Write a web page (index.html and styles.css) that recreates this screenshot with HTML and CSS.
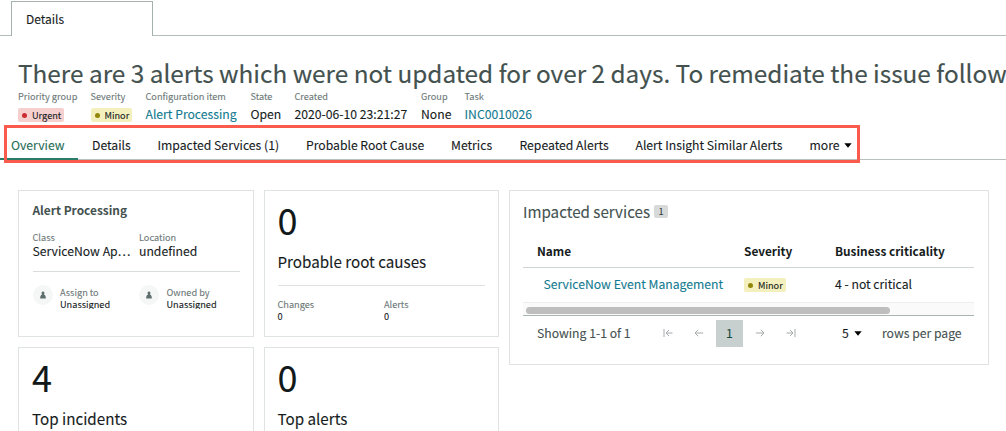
FILE: index.html
```html
<!DOCTYPE html>
<html lang="en">
<head>
<meta charset="utf-8">
<title>Alert details</title>
<link rel="stylesheet" href="styles.css">
</head>
<body>
<div class="tabbar"><div class="page-tab">Details</div></div>
<h1 class="title">There are 3 alerts which were not updated for over 2 days. To remediate the issue follow</h1>
<div class="meta">
  <div><div class="label">Priority group</div><div class="value"><span class="pill urgent"><i></i>Urgent</span></div></div>
  <div><div class="label">Severity</div><div class="value"><span class="pill minor"><i></i>Minor</span></div></div>
  <div><div class="label">Configuration item</div><div class="value link">Alert Processing</div></div>
  <div><div class="label">State</div><div class="value">Open</div></div>
  <div><div class="label">Created</div><div class="value">2020-06-10 23:21:27</div></div>
  <div><div class="label">Group</div><div class="value">None</div></div>
  <div><div class="label">Task</div><div class="value link">INC0010026</div></div>
</div>
<nav class="tabs">
  <div class="active">Overview</div>
  <div>Details</div>
  <div>Impacted Services (1)</div>
  <div>Probable Root Cause</div>
  <div>Metrics</div>
  <div>Repeated Alerts</div>
  <div>Alert Insight Similar Alerts</div>
  <div class="more">more<svg width="8" height="5" viewBox="0 0 8 5"><path d="M.3.2h7.400L4 4.800z"/></svg></div>
  <div class="highlight"></div>
</nav>
<main class="board">
  <div class="cards">
    <section class="card info">
      <h2>Alert Processing</h2>
      <div class="pair">
        <div><div class="label">Class</div><div class="big">ServiceNow Ap…</div></div>
        <div><div class="label">Location</div><div class="big">undefined</div></div>
      </div>
      <div class="people">
        <div class="person"><span class="avatar"><svg width="8" height="8" viewBox="0 0 8 8"><path d="M4 .5C2.800.500 2.500 1.300 2.600 2.200c.1.700.3 1 .4 1.300C1.800 4 1.200 4.800 1.200 7.500h5.600C6.800 4.800 6.200 4 5 3.500c.1-.3.3-.6.4-1.300C5.500 1.300 5.200.5 4 .5z"/></svg></span><div><div class="label">Assign to</div><div class="small clip">Unassigned</div></div></div>
        <div class="person"><span class="avatar"><svg width="8" height="8" viewBox="0 0 8 8"><path d="M4 .5C2.800.500 2.500 1.300 2.600 2.200c.1.700.3 1 .4 1.300C1.800 4 1.200 4.800 1.200 7.500h5.600C6.800 4.800 6.200 4 5 3.500c.1-.3.3-.6.4-1.300C5.500 1.300 5.200.5 4 .5z"/></svg></span><div><div class="label">Owned by</div><div class="small clip">Unassigned</div></div></div>
      </div>
    </section>
    <section class="card stat">
      <div class="number">0</div>
      <div class="caption">Probable root causes</div>
      <div class="counts">
        <div><div class="label">Changes</div><div class="small">0</div></div>
        <div><div class="label">Alerts</div><div class="small">0</div></div>
      </div>
    </section>
    <section class="card stat cut"><div class="number">4</div><div class="caption">Top incidents</div></section>
    <section class="card stat cut"><div class="number">0</div><div class="caption">Top alerts</div></section>
  </div>
  <section class="card services">
    <h2>Impacted services<span class="badge">1</span></h2>
    <div class="row head"><div>Name</div><div>Severity</div><div>Business criticality</div></div>
    <div class="row body"><div class="link">ServiceNow Event Management</div><div><span class="pill minor"><i></i>Minor</span></div><div>4 - not critical</div></div>
    <div class="scroll"><div class="thumb"></div></div>
    <div class="pager">
      <span class="showing">Showing 1-1 of 1</span>
      <svg width="10" height="10" viewBox="0 0 10 10"><path d="M1 1v8M9.500 5H3M6 2 3 5l3 3"/></svg>
      <svg width="10" height="10" viewBox="0 0 10 10"><path d="M9.200 5H1M4.200 1.800 1 5l3.200 3.200"/></svg>
      <span class="page">1</span>
      <svg width="10" height="10" viewBox="0 0 10 10"><path d="M.8 5H9M5.800 1.800 9 5 5.800 8.200"/></svg>
      <svg width="10" height="10" viewBox="0 0 10 10"><path d="M9 1v8M.5 5H7M4 2l3 3-3 3"/></svg>
      <span class="size">5<svg width="8" height="5" viewBox="0 0 8 5"><path d="M.3.2h7.400L4 4.800z"/></svg></span>
      <span>rows per page</span>
    </div>
  </section>
</main>
</body>
</html>
```
FILE: styles.css
```css
* { box-sizing: border-box; }
body { margin: 0; width: 1006px; height: 431px; overflow: hidden; background: #fff; color: #161b1c; font: 12.2px/16px "Noto Sans CJK SC", "Open Sans", sans-serif; white-space: nowrap; -webkit-text-stroke: .1px; }
h1, h2 { margin: 0; font-weight: 400; }
svg { display: block; flex: none; }
.tabbar { height: 36px; border-bottom: 1px solid #b3bdbb; padding: 1px 0 0 11px; }
.page-tab { width: 142px; height: 35px; border: 1px solid #a5b1af; border-bottom: 0; background: #fff; padding: 9px 0 0 14px; font-size: 12px; }
.title { margin-top: 20px; padding-left: 18px; height: 34px; font-size: 24.35px; line-height: 33px; color: #43514f; -webkit-text-stroke: .15px; }
.meta { display: grid; grid-template-columns: 72.5px 55px 105px 44px 126.5px 43.5px auto; padding-left: 18px; height: 35px; }
.label { font-size: 9.2px; line-height: 14px; color: #6c7978; }
.meta .label { line-height: 13px; }
.value { height: 20px; line-height: 20px; margin-top: 1px; }
.link { color: #127a90; }
.pill { display: flex; align-items: center; width: fit-content; height: 14px; padding: 0 3px 0 4px; border-radius: 2px; font-size: 9.2px; line-height: 13px; }
.value .pill { position: relative; top: 4px; }
.pill i { width: 5px; height: 5px; margin-right: 5px; border-radius: 50%; }
.urgent { background: #f6cfcf; }
.urgent i { background: #cb2d32; }
.minor { background: #f4f0bd; }
.minor i { background: #928709; }
.tabs { position: relative; display: grid; grid-template-columns: 81px 65.5px 148.5px 145px 68.5px 116px 174px auto; height: 35px; padding: 12px 0 0 11px; border-bottom: 1px solid #b9bfbe; }
.active { color: #1f6d56; height: 23px; margin-left: -11px; padding-left: 11px; width: 78px; border-bottom: 2px solid #2b7c68; }
.more { display: flex; gap: 4px; }
.more svg { margin-top: 6px; }
.highlight { position: absolute; left: 4px; top: 0; width: 856px; height: 38px; border: 3px solid #fb5b4d; }
.board { display: flex; gap: 10px; padding: 30px 0 0 18px; align-items: flex-start; }
.cards { display: grid; grid-template-columns: 235.5px 235.5px; grid-template-rows: 147px 84px; column-gap: 10px; row-gap: 10px; }
.card { border: 1px solid #dfe3e3; padding: 13px 13px 0; }
.cut { border-bottom: 0; }
.info { padding-left: 13.5px; }
.info h2 { font-size: 11.9px; line-height: 12px; font-weight: 700; color: #43514f; -webkit-text-stroke: 0; }
.pair { display: grid; grid-template-columns: 106.5px auto; margin: 15px 0 0; width: 207px; height: 41px; border-bottom: 1px solid #d9dcdc; }
.pair .label { line-height: 13px; }
.big { line-height: 14px; }
.people { display: grid; grid-template-columns: 106.5px auto; padding-top: 13px; }
.person { display: flex; gap: 7.5px; }
.person .label { line-height: 15px; }
.avatar { width: 20px; height: 20px; border-radius: 50%; background: #f5f7f7; display: flex; align-items: center; justify-content: center; fill: #5e6e6c; }
.small { font-size: 9.2px; line-height: 10px; }
.clip { height: 9px; line-height: 9px; overflow: hidden; }
.stat { padding-top: 9px; }
.number { font-size: 36px; line-height: 38px; color: #111819; }
.caption { font-size: 15.2px; line-height: 22px; margin-top: 12px; }
.counts { display: grid; grid-template-columns: 106.5px auto; width: 207px; margin-top: 13px; border-top: 1px solid #dfe3e3; padding-top: 11px; }
.services { width: 480px; height: 175px; padding-top: 11px; }
.services h2 { display: flex; align-items: center; gap: 4px; font-size: 15.15px; line-height: 18px; color: #43514f; }
.badge { width: 14px; height: 13px; border-radius: 2px; background: #d8dada; color: #33403e; font-size: 9.2px; line-height: 13px; text-align: center; }
.row { display: grid; grid-template-columns: 207px 91px auto; width: 451px; padding-left: 14px; }
.head { height: 48px; border-bottom: 1px solid #d0d6d5; padding-top: 23px; line-height: 16px; font-size: 11.85px; font-weight: 700; -webkit-text-stroke: 0; }
.body { height: 34px; line-height: 32px; }
.body .link { padding-left: 6.5px; }
.body .pill { margin-top: 10px; }
.scroll { width: 451px; height: 14px; padding: 4px 3px 0; background: #fafafa; border-top: 1px solid #eee; border-bottom: 1px solid #a9b7b4; }
.thumb { width: 364px; height: 7px; border-radius: 4px; background: #bebebe; }
.pager { display: flex; align-items: center; height: 34px; padding: 0 0 0 14px; color: #43514f; }
.pager > svg { fill: none; stroke: #a5abab; stroke-width: 1; margin-right: 21px; }
.showing { width: 126px; }
.page { width: 27px; height: 27px; margin: 0 12px 0 -9px; background: #c8d0cf; color: #17483d; line-height: 27px; text-align: center; }
.size { display: flex; align-items: center; gap: 5px; width: 40px; margin-left: 25px; color: #161b1c; }
```
